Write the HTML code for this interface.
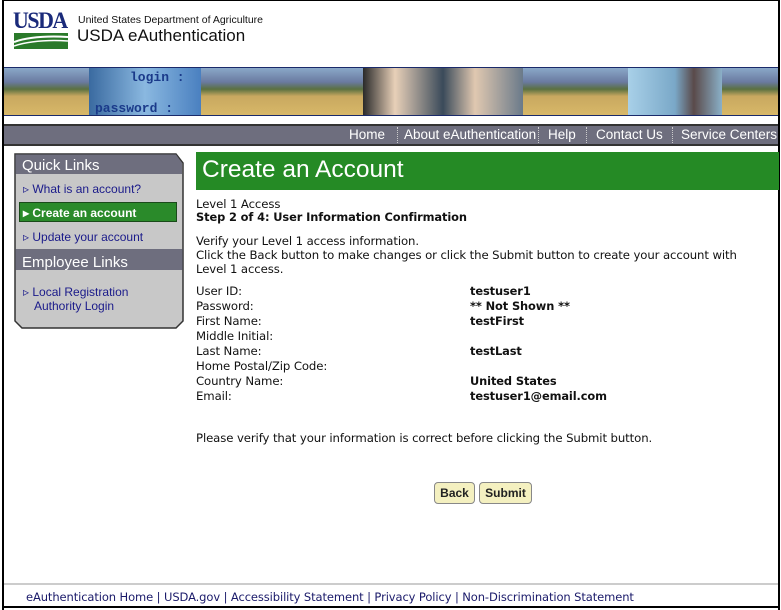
<!DOCTYPE html>
<html><head><meta charset="utf-8"><style>
*{margin:0;padding:0;box-sizing:border-box}
body{width:781px;height:610px;background:#fff;position:relative;overflow:hidden;font-family:"DejaVu Sans","Liberation Sans",sans-serif}
.a{position:absolute;white-space:nowrap}
.t{font-size:11.7px;color:#111;letter-spacing:-0.1px}
.b{font-weight:bold;font-size:11.4px}
.ar{font-family:"Liberation Sans",sans-serif}
</style></head><body>
<div class="a" style="left:2px;top:0;width:2px;height:610px;background:#000"></div>
<div class="a" style="left:778px;top:0;width:2px;height:610px;background:#000"></div>
<div class="a" style="left:2px;top:606px;width:778px;height:2px;background:#000"></div>
<div class="a" style="left:2px;top:0;width:778px;height:1px;background:#000"></div>
<div class="a" style="left:13px;top:8px;font:bold 23px 'Liberation Serif',serif;color:#1a2a7a;letter-spacing:-1.5px;transform:scaleX(0.95);transform-origin:left">USDA</div>
<div class="a" style="left:14px;top:33px;width:54px;height:16px;background:#2a7a2a;overflow:hidden">
<svg width="54" height="16"><path d="M0 9 Q20 2 54 4" stroke="#fff" stroke-width="2" fill="none"/><path d="M0 13 Q22 6 54 8" stroke="#fff" stroke-width="1.5" fill="none"/></svg></div>
<div class="a ar" style="left:78px;top:14px;font-size:10.5px;color:#111">United States Department of Agriculture</div>
<div class="a ar" style="left:77px;top:26px;font-size:17px;color:#111">USDA eAuthentication</div>
<div class="a" style="left:4px;top:67px;width:774px;height:49px;border-top:1px solid #1a2a6a;border-bottom:1px solid #1a2a6a;background:linear-gradient(180deg,#8aa8c8 0,#6a7aa0 30%,#5a7040 45%,#c8a860 60%,#d8b868 100%)"></div>
<div class="a" style="left:89px;top:68px;width:112px;height:47px;background:linear-gradient(90deg,#3a6aa0,#8ab8e0,#4a80c0)"></div>
<div class="a" style="left:130px;top:70px;font:bold 13px 'Liberation Mono',monospace;color:#1a3a8a">login :</div>
<div class="a" style="left:95px;top:101px;font:bold 13px 'Liberation Mono',monospace;color:#1a3a8a">password :</div>
<div class="a" style="left:363px;top:68px;width:160px;height:47px;background:linear-gradient(90deg,#2a2a2a,#e8d0b8 20%,#3a4a5a 50%,#e0c8b0 70%,#6a7a8a)"></div>
<div class="a" style="left:628px;top:68px;width:94px;height:47px;background:linear-gradient(90deg,#a8d0e8,#7aa8c8 50%,#5a4a4a 70%,#8ab0c8)"></div>
<div class="a" style="left:4px;top:124px;width:774px;height:22px;background:#6e6e7e;border-top:2px solid #333;border-bottom:2px solid #333"></div>
<div class="a ar" style="left:349px;top:127px;font-size:13.5px;color:#fff">Home</div>
<div class="a ar" style="left:404px;top:127px;font-size:13.5px;color:#fff">About eAuthentication</div>
<div class="a ar" style="left:548px;top:127px;font-size:13.5px;color:#fff">Help</div>
<div class="a ar" style="left:596px;top:127px;font-size:13.5px;color:#fff">Contact Us</div>
<div class="a ar" style="left:681px;top:127px;font-size:13.5px;color:#fff">Service Centers</div>
<div class="a" style="left:397px;top:127px;height:16px;border-left:1px dotted #ccc"></div>
<div class="a" style="left:538px;top:127px;height:16px;border-left:1px dotted #ccc"></div>
<div class="a" style="left:586px;top:127px;height:16px;border-left:1px dotted #ccc"></div>
<div class="a" style="left:672px;top:127px;height:16px;border-left:1px dotted #ccc"></div>
<svg class="a" style="left:14px;top:153px" width="170" height="176"><path d="M1 1 H162 L169 10 V168 L162 175 H8 L1 168 Z" fill="#c8c8c8" stroke="#333" stroke-width="1.5"/><path d="M1.5 1.5 H162 L168 10 V21 H1.5Z" fill="#6e6e7e"/><rect x="1.5" y="96" width="167" height="21" fill="#6e6e7e"/></svg>
<div class="a ar" style="left:22px;top:157px;font-size:15px;color:#fff">Quick Links</div>
<div class="a ar" style="left:22px;top:254px;font-size:15px;color:#fff">Employee Links</div>
<div class="a" style="left:19px;top:202px;width:158px;height:20px;background:#2a8a2a;border:1px solid #1a4a1a"></div>
<div class="a ar" style="left:23px;top:182px;font-size:12px;color:#1a1a8a">▹ What is an account?</div>
<div class="a ar" style="left:23px;top:206px;font-size:12px;color:#fff;font-weight:bold">▸ Create an account</div>
<div class="a ar" style="left:23px;top:230px;font-size:12px;color:#1a1a8a">▹ Update your account</div>
<div class="a ar" style="left:23px;top:285px;font-size:12px;color:#1a1a8a">▹ Local Registration</div>
<div class="a ar" style="left:34px;top:299px;font-size:12px;color:#1a1a8a">Authority Login</div>
<div class="a" style="left:196px;top:152px;width:583px;height:38px;background:#258a25"></div>
<div class="a ar" style="left:202px;top:156px;font-size:24.5px;color:#fff">Create an Account</div>
<div class="a t" style="left:196px;top:197px">Level 1 Access</div>
<div class="a t b" style="left:196px;top:210px">Step 2 of 4: User Information Confirmation</div>
<div class="a t" style="left:196px;top:234px">Verify your Level 1 access information.</div>
<div class="a t" style="left:196px;top:248px">Click the Back button to make changes or click the Submit button to create your account with</div>
<div class="a t" style="left:196px;top:262px">Level 1 access.</div>
<div class="a t" style="left:196px;top:284px;line-height:15px">User ID:<br>Password:<br>First Name:<br>Middle Initial:<br>Last Name:<br>Home Postal/Zip Code:<br>Country Name:<br>Email:</div>
<div class="a t b" style="left:470px;top:284px;line-height:15px">testuser1<br>** Not Shown **<br>testFirst<br><br>testLast<br><br>United States<br>testuser1@email.com</div>
<div class="a t" style="left:196px;top:431px">Please verify that your information is correct before clicking the Submit button.</div>
<div class="a ar" style="left:434px;top:482px;width:41px;height:22px;background:#f4f0c0;border:1px solid #888;border-radius:4px;font-size:12px;font-weight:bold;text-align:center;line-height:20px;color:#222">Back</div>
<div class="a ar" style="left:479px;top:482px;width:53px;height:22px;background:#f4f0c0;border:1px solid #888;border-radius:4px;font-size:12px;font-weight:bold;text-align:center;line-height:20px;color:#222">Submit</div>
<div class="a" style="left:4px;top:583px;width:774px;height:2px;background:#ccc"></div>
<div class="a t" style="left:26px;top:590px;color:#1a1a6a;font-size:11.5px">eAuthentication Home | USDA.gov | Accessibility Statement | Privacy Policy | Non-Discrimination Statement</div>
</body></html>
